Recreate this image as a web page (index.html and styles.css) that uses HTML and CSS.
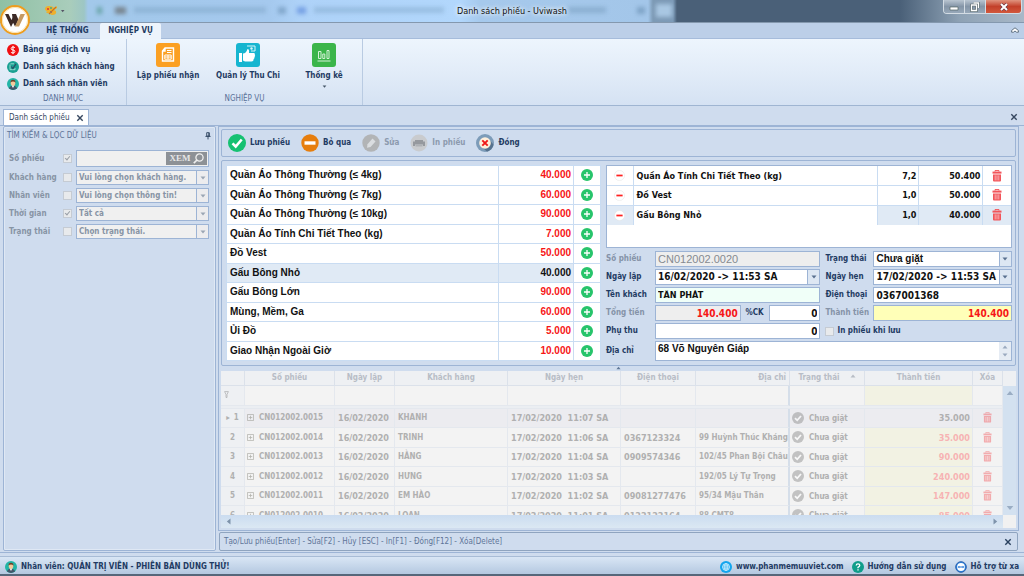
FILE: index.html
```html
<!DOCTYPE html>
<html lang="vi">
<head>
<meta charset="utf-8">
<title>Danh sách phiếu - Uviwash</title>
<link rel="stylesheet" href="styles.css">
</head>
<body>
<svg class="defs" aria-hidden="true">
  <symbol id="plus" viewBox="0 0 12 12"><circle cx="6" cy="6" r="6" fill="#27c46b"/><path d="M6 3v6M3 6h6" stroke="#fff" stroke-width="1.3"/></symbol>
  <symbol id="minus" viewBox="0 0 12 12"><circle cx="6" cy="6" r="5.5" fill="#fff" stroke="#e6e6e6" stroke-width=".6"/><path d="M2.6 6h6.800" stroke="#f22" stroke-width="1.900"/></symbol>
  <symbol id="trash" viewBox="0 0 10 12"><path d="M3 1.6V.6h4v1" fill="none" stroke="#f2555a" stroke-width="1"/><path d="M.5 1.6h9v2h-9z" fill="#f2555a"/><path d="M1 4.4h8v6.2q0 1-1 1H2q-1 0-1-1z" fill="#f2555a"/><path d="M3.2 5.4v5M5 5.4v5M6.8 5.4v5" stroke="#fbc4c6" stroke-width=".8"/></symbol>
  <symbol id="done" viewBox="0 0 12 12"><circle cx="6" cy="6" r="6" fill="#888"/><path d="M3 6.2l2.2 2.1L9 4" fill="none" stroke="#fff" stroke-width="1.8"/></symbol>
  <symbol id="expand" viewBox="0 0 8 8"><path d="M.5.5h7v7h-7zM4 2v4M2 4h4" fill="none" stroke="#8a8a80" stroke-width=".9"/></symbol>
  <symbol id="down" viewBox="0 0 6 4"><path d="M.5.5h5L3 3.5z" fill="currentColor"/></symbol>
  <symbol id="up" viewBox="0 0 6 4"><path d="M.5 3.5h5L3 .5z" fill="currentColor"/></symbol>
  <symbol id="close" viewBox="0 0 8 8"><path d="M1.300 1.300l5.400 5.400M6.700 1.300L1.300 6.700" stroke="currentColor" stroke-width="1.400"/></symbol>
  <symbol id="person" viewBox="0 0 14 14"><circle cx="7" cy="7" r="7" fill="#22b5a6"/><path d="M2.3 12.2Q3 9 7 9t4.700 3.200Q7 15.600 2.300 12.200z" fill="#42566a"/><path d="M5.300 8.500h3.400L7 11.600z" fill="#fff"/><ellipse cx="7" cy="5.800" rx="2.700" ry="3.300" fill="#f5c99b"/><path d="M4.200 5.500Q3.800 2 7 2t2.800 3.500Q9 4.200 7 4.200T4.200 5.500z" fill="#6b4028"/></symbol>
</svg>

<header class="titlebar">
  <div class="ghosts" aria-hidden="true"><i class="ghost g1"></i><i class="ghost g2"></i><i class="ghost g3"></i><i class="ghost g4"></i><i class="ghost g5"></i><i class="ghost g6"></i><i class="ghost g7"></i><i class="ghost g8"></i><i class="ghost g9"></i></div>
  <button class="quick" aria-label="Giao diện">
    <svg width="26" height="14" viewBox="0 0 26 14"><path d="M1 5q0-3 4-3t5 2l3-2v2l-3 2 2 1q1 4-4 4-2 0-2-2-3 1-4-1 1-1 2-1-3 0-3-2z" fill="#eeb02c"/><circle cx="4" cy="5" r="1" fill="#d33"/><circle cx="7" cy="4" r="1" fill="#4a8"/><circle cx="7" cy="8" r="1" fill="#36c"/><path d="M5 10l7-7" stroke="#c9701f" stroke-width="1.100"/><path d="M17 6h3.500l-1.800 2.200z" fill="#556"/></svg>
  </button>
  <h1>Danh sách phiếu - Uviwash</h1>
  <div class="wincontrols">
    <button aria-label="Thu nhỏ"><svg width="10" height="8" viewBox="0 0 10 8"><path d="M1 4h8v3H1z" fill="#fff" stroke="#566" stroke-width=".7"/></svg></button>
    <button aria-label="Khôi phục"><svg width="10" height="10" viewBox="0 0 10 10"><path d="M3.500 1h5v5M1.500 3h5v5.500h-5z" fill="none" stroke="#566" stroke-width="2.600"/><path d="M3.500 1h5v5M1.500 3h5v5.500h-5z" fill="none" stroke="#fff" stroke-width="1.300"/></svg></button>
    <button class="shut" aria-label="Đóng cửa sổ"><svg width="10" height="8" viewBox="0 0 10 8"><path d="M2 1l6 6M8 1L2 7" stroke="#634" stroke-width="3.200"/><path d="M2 1l6 6M8 1L2 7" stroke="#fff" stroke-width="2"/></svg></button>
  </div>
  <svg class="logo" viewBox="0 0 30 30"><circle cx="15" cy="15" r="14" fill="#fff" stroke="#ee9d1e" stroke-width="2"/><circle cx="15" cy="15" r="12.600" fill="none" stroke="#f9dca0" stroke-width=".8"/><path d="M5 9h3.500l3 6 1.500-3 2.500 1L11 22z" fill="#3c2a26"/><path d="M12 9h4l2.500 6-3.500 6.500-2-4z" fill="#3c2a26"/><path d="M20.500 9H25l-6 12.500h-4z" fill="#c69a63"/></svg>
</header>

<nav class="tabs">
  <button>HỆ THỐNG</button><button class="on">NGHIỆP VỤ</button>
  <svg class="fold" width="8" height="6" viewBox="0 0 8 6"><path d="M.6 3.500L4 .8l3.400 2.700v1.700H5.500L4 4 2.500 5.200H.6z" fill="#fff" stroke="#567" stroke-width=".9"/></svg>
</nav>

<section class="ribbon">
  <div class="group menu">
    <div class="links">
      <button><svg width="12" height="12" viewBox="0 0 12 12"><circle cx="6" cy="6" r="6" fill="#f00f12"/><path d="M8 4Q7.500 3 6 3T4.200 4.400 6 6t1.900 1.600T6 9 4 8M6 1.800v8.400" fill="none" stroke="#fff" stroke-width="1"/></svg>Bảng giá dịch vụ</button>
      <button><svg width="12" height="12" viewBox="0 0 12 12"><circle cx="6" cy="6" r="6" fill="#1aa193"/><path d="M3.500 2.800H7M3 3.500v5.200h5V7" fill="none" stroke="#9fdcd4" stroke-width=".9"/><path d="M4.300 5.500l1.500 2L9 2.800" fill="none" stroke="#2c4b64" stroke-width="1.200"/></svg>Danh sách khách hàng</button>
      <button><svg width="12" height="12"><use href="#person"/></svg>Danh sách nhân viên</button>
    </div>
    <div class="caption">DANH MỤC</div>
  </div>
  <div class="group tasks">
    <div class="bigs">
      <button class="w1"><svg width="24" height="24" viewBox="0 0 24 24"><rect width="24" height="24" rx="3" fill="#fba023"/><path d="M9 5h8.500v13H6.500V8zM9 5v3H6.500" fill="none" stroke="#fff" stroke-width="1.400"/><path d="M11 7.500h4.500M11 9.500h4.500" stroke="#fff" stroke-width="1"/><path d="M8.800 12h6.400v4.200H8.800zM8.800 14h6.400M12 12v4" fill="none" stroke="#fff" stroke-width="1"/></svg>Lập phiếu nhận</button>
      <button class="w2"><svg width="24" height="24" viewBox="0 0 24 24"><rect width="24" height="24" rx="3" fill="#16b5d0"/><path d="M3 10h3v9H3z" fill="#fff"/><path d="M7 10.500q3 0 4.500-4.500 2 0 1.500 4h5q1.500.5.8 2 .8 1-.3 2 .3 1.300-.8 2 0 2.500-2.200 2.500H9l-2-1z" fill="#fff"/><path d="M11 3h8v5h-4" fill="none" stroke="#d9f5f9" stroke-width="1"/><circle cx="15.500" cy="5.500" r="1.200" fill="#d9f5f9"/></svg>Quản lý Thu Chi</button>
      <button class="w3"><svg width="24" height="24" viewBox="0 0 24 24"><rect width="24" height="24" rx="3" fill="#3bb54a"/><path d="M6.500 8.500h2.500v7H6.500zM10.800 11h2v4.500h-2zM15 7.500h2v8h-2zM5.500 18h13" fill="none" stroke="#d5f2d8" stroke-width="1"/></svg>Thống kê<svg class="drop" width="5" height="3"><use href="#down"/></svg></button>
    </div>
    <div class="caption">NGHIỆP VỤ</div>
  </div>
</section>

<nav class="doctabs">
  <div class="doctab">Danh sách phiếu<button aria-label="Đóng tab"><svg width="8" height="8"><use href="#close"/></svg></button></div>
  <button class="right" aria-label="Đóng"><svg width="8" height="8"><use href="#close"/></svg></button>
</nav>

<main>
  <aside>
    <h2>TÌM KIẾM &amp; LỌC DỮ LIỆU<svg width="6" height="8" viewBox="0 0 7 9"><path d="M2 .6h3v4H2zM.5 5h6M3.500 5v3.500M4.500 1v4" fill="none" stroke="#334863" stroke-width="1.100"/></svg></h2>
    <div class="filters">
      <label for="f1">Số phiếu</label><input type="checkbox" checked disabled aria-label="Lọc số phiếu">
      <div class="combo"><input id="f1" type="text" disabled><button class="view" disabled>XEM<svg width="11" height="11" viewBox="0 0 11 11"><circle cx="6.500" cy="4.500" r="3.600" fill="none" stroke="#eee" stroke-width="1.300"/><path d="M4 7L.8 10.200" stroke="#eee" stroke-width="1.700"/></svg></button></div>
      <label for="f2">Khách hàng</label><input type="checkbox" disabled aria-label="Lọc khách hàng">
      <div class="combo"><select id="f2" disabled><option>Vui lòng chọn khách hàng.</option></select><span class="arrow"><svg width="6" height="4"><use href="#down"/></svg></span></div>
      <label for="f3">Nhân viên</label><input type="checkbox" disabled aria-label="Lọc nhân viên">
      <div class="combo"><select id="f3" disabled><option>Vui lòng chọn thông tin!</option></select><span class="arrow"><svg width="6" height="4"><use href="#down"/></svg></span></div>
      <label for="f4">Thời gian</label><input type="checkbox" checked disabled aria-label="Lọc thời gian">
      <div class="combo"><select id="f4" disabled><option>Tất cả</option></select><span class="arrow"><svg width="6" height="4"><use href="#down"/></svg></span></div>
      <label for="f5">Trạng thái</label><input type="checkbox" disabled aria-label="Lọc trạng thái">
      <div class="combo"><select id="f5" disabled><option>Chọn trạng thái.</option></select><span class="arrow"><svg width="6" height="4"><use href="#down"/></svg></span></div>
    </div>
  </aside>

  <div class="work">
    <div class="desk">
      <div class="toolbar">
        <button><svg width="18" height="18" viewBox="0 0 18 18"><circle cx="9" cy="9" r="9" fill="#16c172"/><path d="M4.500 9.300l3.200 3.200 6-7" fill="none" stroke="#fff" stroke-width="2.600"/></svg>Lưu phiếu</button>
        <button><svg width="18" height="18" viewBox="0 0 18 18"><circle cx="9" cy="9" r="8.700" fill="#e67e0e"/><path d="M3.500 7.300h11v3.400h-11z" fill="#fff"/></svg>Bỏ qua</button>
        <button disabled><svg width="18" height="18" viewBox="0 0 18 18"><circle cx="9" cy="9" r="8.700" fill="#b2b4b6"/><path d="M10.500 4.500l3 3-5 5.500-3.500.8.500-3.500z" fill="#dadde0"/></svg>Sửa</button>
        <button disabled><svg width="18" height="18" viewBox="0 0 18 18"><circle cx="9" cy="9" r="8.500" fill="#c9cbce"/><path d="M5 6h8v1.500h2v4.500h-2v-1.500H5V12H3V7.500h2z" fill="#96999e"/><path d="M5.500 11h7v1.500h-7z" fill="#aeb1b5"/></svg>In phiếu</button>
        <button><svg width="18" height="18" viewBox="0 0 18 18"><circle cx="9" cy="9" r="9" fill="#7d9cb9"/><path d="M12.500 5L17.500 10.500Q16.500 16 11 17.700L6 13z" fill="#56728e"/><circle cx="9" cy="9" r="5.800" fill="#fff0dc"/><path d="M6.300 6.300l5.400 5.400M11.700 6.300l-5.400 5.400" stroke="#f01818" stroke-width="1.900"/></svg>Đóng</button>
      </div>

      <div class="editor">
        <table class="grid services">
          <colgroup><col><col class="c-price"><col class="c-add"></colgroup>
          <tbody>
          <tr><td>Quần Áo Thông Thường (≤ 4kg)</td><td class="n">40.000</td><td class="c"><svg width="12" height="12"><use href="#plus"/></svg></td></tr>
          <tr><td>Quần Áo Thông Thường (≤ 7kg)</td><td class="n">60.000</td><td class="c"><svg width="12" height="12"><use href="#plus"/></svg></td></tr>
          <tr><td>Quần Áo Thông Thường (≤ 10kg)</td><td class="n">90.000</td><td class="c"><svg width="12" height="12"><use href="#plus"/></svg></td></tr>
          <tr><td>Quần Áo Tính Chi Tiết Theo (kg)</td><td class="n">7.000</td><td class="c"><svg width="12" height="12"><use href="#plus"/></svg></td></tr>
          <tr><td>Đồ Vest</td><td class="n">50.000</td><td class="c"><svg width="12" height="12"><use href="#plus"/></svg></td></tr>
          <tr class="sel"><td>Gấu Bông Nhỏ</td><td class="n">40.000</td><td class="c"><svg width="12" height="12"><use href="#plus"/></svg></td></tr>
          <tr><td>Gấu Bông Lớn</td><td class="n">90.000</td><td class="c"><svg width="12" height="12"><use href="#plus"/></svg></td></tr>
          <tr><td>Mùng, Mềm, Ga</td><td class="n">60.000</td><td class="c"><svg width="12" height="12"><use href="#plus"/></svg></td></tr>
          <tr><td>Ủi Đồ</td><td class="n">5.000</td><td class="c"><svg width="12" height="12"><use href="#plus"/></svg></td></tr>
          <tr><td>Giao Nhận Ngoài Giờ</td><td class="n">10.000</td><td class="c"><svg width="12" height="12"><use href="#plus"/></svg></td></tr>
          </tbody>
        </table>

        <div class="ticket">
          <div class="cart">
            <table class="grid items">
              <colgroup><col class="c-minus"><col><col class="c-qty"><col class="c-sum"><col class="c-del"></colgroup>
              <tbody>
              <tr><td class="c"><svg width="11" height="11"><use href="#minus"/></svg></td><td>Quần Áo Tính Chi Tiết Theo (kg)</td><td class="n">7,2</td><td class="n">50.400</td><td class="c"><svg width="10" height="12"><use href="#trash"/></svg></td></tr>
              <tr><td class="c"><svg width="11" height="11"><use href="#minus"/></svg></td><td>Đồ Vest</td><td class="n">1,0</td><td class="n">50.000</td><td class="c"><svg width="10" height="12"><use href="#trash"/></svg></td></tr>
              <tr class="sel"><td class="c"><svg width="11" height="11"><use href="#minus"/></svg></td><td class="focus">Gấu Bông Nhỏ</td><td class="n">1,0</td><td class="n">40.000</td><td class="c"><svg width="10" height="12"><use href="#trash"/></svg></td></tr>
              </tbody>
            </table>
          </div>
          <form class="form">
            <label class="off" for="t1">Số phiếu</label><input id="t1" class="field gray dim" value="CN012002.0020" readonly>
            <label class="second" for="t2">Trạng thái</label><div class="combo"><select id="t2" class="field wide"><option>Chưa giặt</option></select><span class="arrow"><svg width="6" height="4"><use href="#down"/></svg></span></div>
            <label for="t3">Ngày lập</label><div class="combo"><input id="t3" class="field" value="16/02/2020 -&gt; 11:53 SA"><span class="arrow"><svg width="6" height="4"><use href="#down"/></svg></span></div>
            <label class="second" for="t4">Ngày hẹn</label><div class="combo"><input id="t4" class="field" value="17/02/2020 -&gt; 11:53 SA"><span class="arrow"><svg width="6" height="4"><use href="#down"/></svg></span></div>
            <label for="t5">Tên khách</label><input id="t5" class="field mint" value="TẤN PHÁT">
            <label class="second" for="t6">Điện thoại</label><input id="t6" class="field" value="0367001368">
            <label class="off" for="t7">Tổng tiền</label><div class="pair"><input id="t7" class="field gray money" value="140.400" readonly><label for="t8">%CK</label><input id="t8" class="field num" value="0"></div>
            <label class="second off" for="t9">Thành tiền</label><input id="t9" class="field yellow money" value="140.400" readonly>
            <label for="t10">Phụ thu</label><input id="t10" class="field num" value="0">
            <label class="second print"><input type="checkbox" class="tick">In phiếu khi lưu</label>
            <label for="t11">Địa chỉ</label><div class="combo addr"><textarea id="t11" class="field wide" rows="1">68 Võ Nguyên Giáp</textarea><span class="spin"><svg width="6" height="4"><use href="#up"/></svg><svg width="6" height="4"><use href="#down"/></svg></span></div>
          </form>
        </div>
      </div>

      <div class="splitter"><svg width="5" height="4"><use href="#up"/></svg></div>

      <div class="history">
        <div class="view-area">
          <table class="orders">
            <colgroup><col class="o-no"><col class="o-code"><col class="o-date"><col><col class="o-due"><col class="o-tel"><col class="o-addr"><col class="o-state"><col class="o-total"><col class="o-del"></colgroup>
            <thead>
              <tr><th></th><th>Số phiếu</th><th>Ngày lập</th><th>Khách hàng</th><th>Ngày hẹn</th><th>Điện thoại</th><th class="r">Địa chỉ</th><th class="sort">Trạng thái<svg width="6" height="4"><use href="#up"/></svg></th><th>Thành tiền</th><th>Xóa</th></tr>
              <tr class="find"><th class="no"><svg width="5" height="7" viewBox="0 0 5 7"><path d="M.6.6h3.800L3 3.500V6.500H2v-3z" fill="none" stroke="#666" stroke-width=".8"/></svg></th><td></td><td></td><td></td><td></td><td></td><td class="edge"></td><td></td><td class="y"></td><td></td></tr>
              <tr class="gap"><td colspan="10"></td></tr>
            </thead>
            <tbody>
              <tr class="cur"><th class="no">1</th><td><svg class="ex" width="7" height="7"><use href="#expand"/></svg>CN012002.0015</td><td class="d">16/02/2020</td><td>KHANH</td><td class="pre d">17/02/2020  11:07 SA</td><td></td><td class="edge"></td><td class="st"><svg width="12" height="12"><use href="#done"/></svg>Chưa giặt</td><td class="y">35.000</td><td class="c"><svg width="9" height="11"><use href="#trash"/></svg></td></tr>
              <tr><th class="no">2</th><td><svg class="ex" width="7" height="7"><use href="#expand"/></svg>CN012002.0014</td><td class="d">16/02/2020</td><td>TRINH</td><td class="pre d">17/02/2020  11:06 SA</td><td class="d">0367123324</td><td class="edge">99 Huỳnh Thúc Kháng</td><td class="st"><svg width="12" height="12"><use href="#done"/></svg>Chưa giặt</td><td class="y">35.000</td><td class="c"><svg width="9" height="11"><use href="#trash"/></svg></td></tr>
              <tr><th class="no">3</th><td><svg class="ex" width="7" height="7"><use href="#expand"/></svg>CN012002.0013</td><td class="d">16/02/2020</td><td>HẰNG</td><td class="pre d">17/02/2020  11:04 SA</td><td class="d">0909574346</td><td class="edge">102/45 Phan Bội Châu</td><td class="st"><svg width="12" height="12"><use href="#done"/></svg>Chưa giặt</td><td class="y">90.000</td><td class="c"><svg width="9" height="11"><use href="#trash"/></svg></td></tr>
              <tr><th class="no">4</th><td><svg class="ex" width="7" height="7"><use href="#expand"/></svg>CN012002.0012</td><td class="d">16/02/2020</td><td>HƯNG</td><td class="pre d">17/02/2020  11:03 SA</td><td></td><td class="edge">192/05 Lý Tự Trọng</td><td class="st"><svg width="12" height="12"><use href="#done"/></svg>Chưa giặt</td><td class="y">240.000</td><td class="c"><svg width="9" height="11"><use href="#trash"/></svg></td></tr>
              <tr><th class="no">5</th><td><svg class="ex" width="7" height="7"><use href="#expand"/></svg>CN012002.0011</td><td class="d">16/02/2020</td><td>EM HÀO</td><td class="pre d">17/02/2020  11:02 SA</td><td class="d">09081277476</td><td class="edge">95/34 Mậu Thân</td><td class="st"><svg width="12" height="12"><use href="#done"/></svg>Chưa giặt</td><td class="y">147.000</td><td class="c"><svg width="9" height="11"><use href="#trash"/></svg></td></tr>
              <tr><th class="no">6</th><td><svg class="ex" width="7" height="7"><use href="#expand"/></svg>CN012002.0010</td><td class="d">16/02/2020</td><td>LOAN</td><td class="pre d">17/02/2020  11:01 SA</td><td class="d">0122122164</td><td class="edge">88 CMT8</td><td class="st"><svg width="12" height="12"><use href="#done"/></svg>Chưa giặt</td><td class="y">85.000</td><td class="c"><svg width="9" height="11"><use href="#trash"/></svg></td></tr>
            </tbody>
          </table>
        </div>
        <div class="vbar"><i></i><svg width="8" height="6" viewBox="0 0 6 4"><use href="#up"/></svg><svg width="8" height="6" viewBox="0 0 6 4"><use href="#down"/></svg></div>
        <div class="hbar"><svg width="5" height="7" viewBox="0 0 5 7"><path d="M4.500.5v6L.8 3.500z" fill="#7e93ab"/></svg><svg width="5" height="7" viewBox="0 0 5 7"><path d="M.5.5v6l3.700-3z" fill="#7e93ab"/></svg></div>
      </div>
    </div>
    <div class="help">Tạo/Lưu phiếu[Enter] - Sửa[F2] - Hủy [ESC] - In[F1] - Đóng[F12] - Xóa[Delete]<button aria-label="Đóng"><svg width="8" height="8"><use href="#close"/></svg></button></div>
  </div>
</main>

<footer>
  <span class="who"><svg width="12" height="12"><use href="#person"/></svg>Nhân viên: QUẢN TRỊ VIÊN - PHIÊN BẢN DÙNG THỬ!</span>
  <a href="#"><svg width="12" height="12" viewBox="0 0 12 12"><circle cx="6" cy="6" r="6" fill="#12a5ee"/><path d="M2.500 6h7M6 2.500v7M3.200 4.200h5.600M3.200 7.800h5.600" stroke="#d3f0ff" stroke-width=".7"/><ellipse cx="6" cy="6" rx="3.500" ry="3.500" fill="none" stroke="#d3f0ff" stroke-width=".8"/><ellipse cx="6" cy="6" rx="1.700" ry="3.500" fill="none" stroke="#d3f0ff" stroke-width=".7"/></svg>www.phanmemuuviet.com</a>
  <a href="#"><svg width="12" height="12" viewBox="0 0 12 12"><circle cx="6" cy="6" r="6" fill="#0f9d8a"/><path d="M4.200 4.500Q4.300 2.800 6 2.800t1.800 1.500Q7.800 5.400 6 6.300v.9M6 8.300v1.300" fill="none" stroke="#fff" stroke-width="1.300"/></svg>Hướng dẫn sử dụng</a>
  <a href="#"><svg width="12" height="12" viewBox="0 0 12 12"><circle cx="6" cy="6" r="5.300" fill="#2a86e0" stroke="#2b5fae" stroke-width="1"/><circle cx="6" cy="6" r="3.900" fill="#fff"/><path d="M2.600 6l1.700-1.300v.8h3.400v-.8L9.400 6 7.700 7.300v-.8H4.300v.8z" fill="#1d6fd0"/></svg>Hỗ trợ từ xa</a>
</footer>
<div class="taskbar"></div>
</body>
</html>
```
FILE: styles.css
```css
:root {
  --ui: "DejaVu Sans Condensed", "DejaVu Sans", sans-serif;
  --wide: "Liberation Sans", Arial, sans-serif;
  --navy: #1f3b63;
  --line: #9db4d5;
  --panel: #cfdcee;
}
* { box-sizing: border-box; }
body {
  margin: 0;
  height: 100vh;
  display: flex;
  flex-direction: column;
  overflow: hidden;
  background: var(--panel);
  color: var(--navy);
  font: bold 8px/12px var(--ui);
}
button, input, select, textarea { font: inherit; color: inherit; margin: 0; padding: 0; border: 0; background: none; border-radius: 0; }
button { display: flex; align-items: center; }
svg { flex: none; }
.defs { position: absolute; width: 0; height: 0; }

/* Window title */
.titlebar {
  position: relative;
  flex: none;
  height: 23px;
  border-bottom: 1px solid #8498ae;
  display: flex;
  justify-content: center;
  background: linear-gradient(90deg, #8fc0a4 0, #a9cdbb 70px, #9dc6c4 84px, #a2c8ea 88px, #a5c9ee 270px, #aed2f8 300px, #b2d7fc 460px, #a6c9ec 480px, #a3c6e9 648px, #7d9ab5 653px, #7c9ab7 673px, #4a6078 677px, #4a6078 900px, #8ea2b5 960px, #a8b8c8);
}
.titlebar h1 { position: relative; margin: 0; padding-top: 5px; font: 9px/12px var(--ui); color: #111; text-shadow: 0 0 5px #fff, 0 0 5px #fff; }
.ghosts { position: absolute; inset: 0; overflow: hidden; filter: blur(2px); }
.ghost { position: absolute; top: 7px; height: 7px; background: #537a9d; opacity: .45; }
.g1 { left: 97px; width: 5px; background: #275; }
.g2 { left: 115px; width: 11px; background: #432; }
.g3 { left: 134px; width: 132px; height: 6px; opacity: .25; }
.g4 { left: 278px; width: 8px; }
.g5 { left: 297px; width: 9px; background: #36c; }
.g6 { left: 314px; width: 130px; height: 6px; opacity: .25; }
.g7 { left: 568px; width: 38px; height: 6px; opacity: .3; }
.g8 { left: 637px; width: 8px; }
.g9 { left: 656px; top: 4px; width: 16px; height: 13px; background: #b4d2ee; opacity: .8; }
.quick { position: absolute; left: 44px; top: 4px; }
.logo { position: absolute; left: 0; top: 5px; width: 30px; height: 30px; z-index: 2; }
.wincontrols { position: absolute; right: 2px; top: 0; display: flex; height: 14px; border: 1px solid #d3dce4; border-top: 0; border-radius: 0 0 4px 4px; overflow: hidden; }
.wincontrols button { width: 21px; justify-content: center; background: linear-gradient(#b9c5d1, #8495a7 50%, #97a8b9); border-right: 1px solid #d3dce4; }
.wincontrols .shut { width: 35px; border: 0; background: linear-gradient(#e0947f, #c3402a 50%, #d2583c); }

/* Ribbon */
.tabs { flex: none; height: 16px; display: flex; align-items: stretch; padding-left: 35px; background: #bccfe8; border-bottom: 1px solid #a6bcdb; }
.tabs button { width: 65px; justify-content: center; }
.tabs .on { width: 61px; height: 16px; background: #edf4fc; border-radius: 2px 2px 0 0; }
.fold { margin: 4px 5px 0 auto; }
.ribbon { flex: none; height: 67px; display: flex; background: linear-gradient(#edf5fd, #e2ecf8 50%, #d5e2f3); border-bottom: 1px solid #9fb5d2; }
.group { display: flex; flex-direction: column; justify-content: space-between; border-right: 1px solid #b9cbe2; }
.menu { width: 127px; }
.tasks { width: 236px; }
.links { display: flex; flex-direction: column; gap: 5px; padding: 5px 0 0 7px; }
.links button { gap: 4px; height: 12px; white-space: nowrap; }
.caption { text-align: center; font-weight: normal; color: #5a7199; }
.bigs { display: flex; padding: 4px 0 0 1px; }
.bigs button { flex-direction: column; gap: 3px; white-space: nowrap; }
.w1, .w2 { width: 80px; }
.w3 { width: 72px; }
.bigs .drop { color: #456; }

/* Document tabs */
.doctabs { flex: none; height: 20px; display: flex; justify-content: space-between; align-items: flex-end; padding: 0 6px 0 3px; border-bottom: 1px solid var(--line); color: #36475f; }
.doctab { display: flex; align-items: center; gap: 7px; height: 16px; padding: 0 4px 0 5px; background: #fff; border: 1px solid var(--line); border-bottom: 0; font-weight: normal; }
.right { padding-bottom: 4px; }

/* Work area */
main { flex: 1; min-height: 0; display: grid; grid-template-columns: 213px minmax(0, 1fr); gap: 2px; padding: 0 5px 1px 3px; border-bottom: 1px solid var(--line); margin-bottom: 3px; }
aside { border: 1px solid var(--line); outline: 1px solid #dfe8f4; outline-offset: -2px; border-radius: 2px; }
h2 { display: flex; justify-content: space-between; align-items: center; margin: 0; padding: 3px 4px 0 3px; font: 8px/12px var(--ui); color: #5e7498; }
.filters { display: grid; grid-template-columns: 54px 13px minmax(0, 1fr); align-items: center; row-gap: 3px; padding: 8px 6px 0 5px; color: #8794a5; }
.filters .combo { height: 15px; background: #f0f0f0; }
.filters .combo:nth-of-type(1) { height: 17px; }
.filters label { white-space: nowrap; }
.filters select { padding: 0 2px; opacity: 1; }
input[type=checkbox] { appearance: none; width: 9px; height: 9px; background: #e8eaec; border: 1px solid #c5cbd3; }
.filters input:checked { position: relative; }
.filters input:checked::after { content: ""; position: absolute; left: 2px; top: 0; width: 2px; height: 4px; border: solid #999fa7; border-width: 0 1px 1px 0; transform: rotate(40deg); }
.combo { display: flex; align-items: stretch; min-width: 0; background: #fff; border: 1px solid var(--line); }
.combo > input, .combo > select, .combo > textarea { flex: 1; width: 0; min-width: 0; border: 0; appearance: none; background: none; resize: none; outline: 0; overflow: hidden; }
.arrow { width: 12px; display: flex; align-items: center; justify-content: center; background: #dde7f3; border-left: 1px solid var(--line); color: #59708f; }
.filters .arrow { background: #ececee; color: #9aa5b4; }
.view { width: 41px; margin: 1px; gap: 2px; justify-content: center; background: #8d9196; color: #e6e6e6; font: bold 9px/11px "Liberation Serif", serif; }

.work { display: flex; flex-direction: column; gap: 1px; min-width: 0; min-height: 0; }
.desk { flex: 1; min-height: 0; display: flex; flex-direction: column; border: 1px solid var(--line); padding: 2px; }
.toolbar { flex: none; height: 28px; display: flex; align-items: center; padding: 0 6px; border: 1px solid var(--line); gap: 11px; border-radius: 2px; }
.toolbar button { gap: 4px; white-space: nowrap; }
.toolbar button:disabled { color: #8c9aae; }
.editor { flex: none; margin-top: 3px; display: grid; grid-template-columns: 376fr 407fr; gap: 5px; padding: 4px 3px 4px 4px; border: 1px solid var(--line); border-radius: 2px; }

.grid { width: 100%; table-layout: fixed; border-collapse: collapse; background: #fff; color: #111; }
.grid td { padding: 0 3px; border: 1px solid #c9dcf2; overflow: hidden; white-space: nowrap; height: 19px; }
.grid .n { text-align: right; padding-right: 2px; }
.grid .c { padding: 0; text-align: center; }
.grid .c svg { display: block; margin: auto; }
.services { height: 196px; border: 1px solid var(--line); font: bold 10px/12px var(--wide); }
.services .n { color: #f61616; }
.services .sel td { background: #e0eaf5; }
.services .sel .n { color: #111; }
.services .sel .c { background: #fff; }
.c-price { width: 75px; }
.c-add { width: 27px; }
.ticket { display: flex; flex-direction: column; gap: 3px; min-width: 0; }
.cart { height: 83px; background: #fff; border: 1px solid var(--line); overflow: hidden; }
.items { height: 59px; border-style: hidden; font-size: 9px; }
.items .sel td { background: #e0eaf5; }
.items .sel .focus { background: #fff; }
.c-minus { width: 26px; }
.c-qty { width: 41px; }
.c-sum { width: 64px; }
.c-del { width: 28px; }

.form { display: grid; grid-template-columns: 49px minmax(0, 166fr) 53px minmax(0, 139fr); grid-template-rows: repeat(5, 16px) 20px; row-gap: 2px; align-items: center; }
.form label { white-space: nowrap; }
.form .second { padding-left: 5px; }
.form .off { color: #8593a8; }
.field { color: #111; font: bold 10px/12px var(--ui); padding: 0 2px; }
.form > .field, .pair .field { width: 100%; min-width: 0; height: 16px; background: #fff; border: 1px solid var(--line); }
.form .combo { height: 16px; }
.form .field.wide { font: bold 10px/12px var(--wide); }
.form .field.gray { background: #eee; }
.form .field.dim { color: #858a90; font: 11px/12px var(--wide); }
.form .field.mint { background: #f0fff8; font-size: 9px; }
.form .field.yellow { background: #ffffb8; }
.form .field.money { color: #f61616; text-align: right; }
.form .field.num { text-align: right; }
.pair { display: grid; grid-template-columns: 86fr 28px 52fr; align-items: center; }
.pair label { text-align: center; }
.form .print { grid-column: span 2; display: flex; align-items: center; gap: 3px; }
.form .addr { grid-column: span 3; height: 20px; }
.form .addr .field { padding: 1px 2px; }
.spin { width: 12px; display: flex; flex-direction: column; justify-content: space-evenly; align-items: center; background: #e6ecf4; color: #9aa9bf; }

.splitter { flex: none; height: 5px; display: flex; justify-content: center; color: #5f7898; }

/* Orders behind the open ticket */
.history { flex: 1; min-height: 0; display: grid; grid-template: minmax(0, 1fr) 13px / minmax(0, 1fr) 13px; background: #f1f1f1; }
.view-area { overflow: hidden; }
.orders { width: 100%; table-layout: fixed; border-collapse: separate; border-spacing: 0; color: #b0b0b0; background: #f3f3f3; }
.orders th, .orders td { height: 19px; padding: 0 3px; border: solid #e4e8ee; border-width: 0 1px 1px 0; text-align: left; overflow: hidden; white-space: nowrap; line-height: 12px; }
.orders tbody tr:nth-child(even) > * { height: 20px; }
.orders thead tr:first-child th { height: 15px; text-align: center; color: #b8bdc6; background: #eef0f3; border-color: #dbe1ea; }
.orders thead tr:first-child .r { text-align: right; }
.orders .gap td { height: 3px; background: #ebeef2; line-height: 0; }
.orders .find > * { height: 20px; }
.orders th.no { text-align: center; background: #eef0f3; }
.orders .find .no { text-align: left; }
.orders .cur .no::before { content: "▸"; margin-right: 4px; }
.orders .cur > * { background: #ececf0; }
.orders .d, .orders .y { font-size: 9px; }
.orders .find svg, .orders .c svg, .orders .st svg { opacity: .45; }
.ex { margin: 0 5px 0 -1px; opacity: .6; vertical-align: -1px; }
.pre { white-space: pre !important; }
.orders .edge { border-right: 2px solid #d5dee9; padding-right: 0; }
.orders .st { padding-left: 2px; }
.st svg { vertical-align: middle; margin-right: 5px; }
.sort svg { margin-left: 10px; vertical-align: 2px; }
.orders .y { background: #f2f2e3; text-align: right; color: #f7b3b3; padding-right: 2px; }
.orders .cur .y { background: #ececf0; color: #b0b0b0; }
.orders .c { text-align: center; padding: 0; }
.c svg { vertical-align: middle; }
.o-no { width: 24px; } .o-code { width: 90px; } .o-date { width: 60px; } .o-due { width: 113px; } .o-tel { width: 75px; }
.o-addr { width: 94px; } .o-state { width: 75px; } .o-total { width: 108px; } .o-del { width: 30px; }
.vbar { display: flex; flex-direction: column; align-items: center; justify-content: space-between; background: #d3e1f0; color: #9aadc4; padding-bottom: 4px; }
.vbar i { align-self: stretch; height: 15px; margin-bottom: 4px; background: #eef0f3; }
.vbar svg:nth-of-type(1) { margin-bottom: auto; }
.hbar { display: flex; align-items: center; justify-content: space-between; padding: 0 5px; background: linear-gradient(#cbdcf0, #dbe8f3); }

.help { flex: none; height: 19px; display: flex; align-items: center; justify-content: space-between; padding: 0 5px 0 4px; border: 1px solid #8fa4bf; border-radius: 2px; font-weight: normal; color: #5e7498; margin: 0 1px; }
.help button { color: #29405e; }

footer { flex: none; height: 18px; display: flex; align-items: center; gap: 8px; padding: 2px 5px 0; border-top: 1px solid #a8bcd6; background: linear-gradient(#d9e6f5, #b4c8e0); white-space: nowrap; }
footer a, .who { display: flex; align-items: center; gap: 4px; color: var(--navy); text-decoration: none; }
.who { margin-right: auto; }
.taskbar { flex: none; height: 2px; background: #56677a; }
```
